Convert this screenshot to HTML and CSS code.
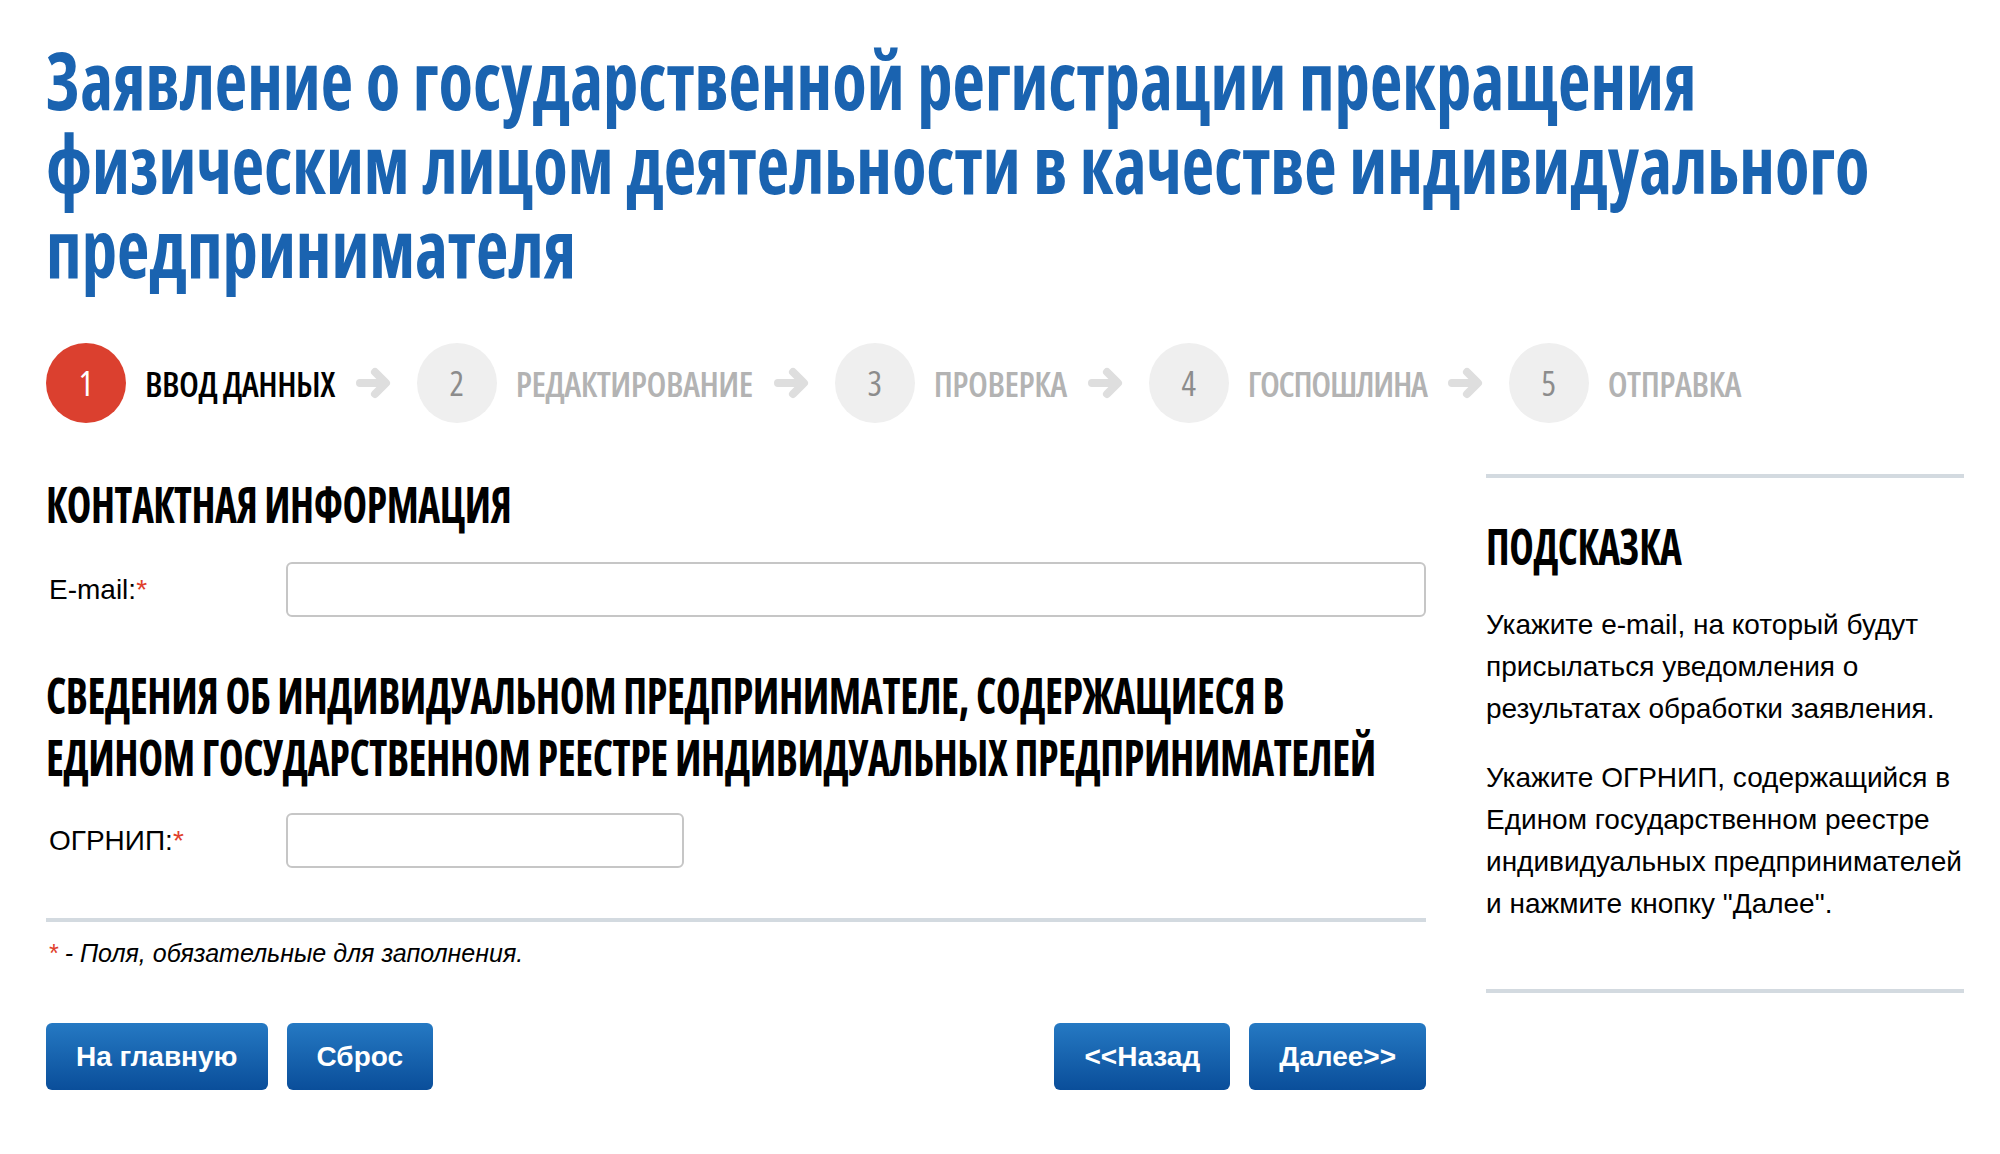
FILE: index.html
```html
<!DOCTYPE html>
<html lang="ru">
<head>
<meta charset="utf-8">
<title>Заявление о государственной регистрации прекращения</title>
<link rel="stylesheet" href="styles.css">
</head>
<body>
<div class="page">
  <h1 class="title">Заявление о государственной регистрации прекращения<br>физическим лицом деятельности в качестве индивидуального<br>предпринимателя</h1>

  <ol class="steps">
    <li class="step active"><span class="num">1</span><span class="label">Ввод данных</span></li>
    <li class="arrow"><svg viewBox="0 0 38 34" width="38" height="34"><path d="M5 17H28M20 6L31 17L20 28" fill="none" stroke="#dedede" stroke-width="8" stroke-linecap="round" stroke-linejoin="round"/></svg></li>
    <li class="step"><span class="num">2</span><span class="label">Редактирование</span></li>
    <li class="arrow"><svg viewBox="0 0 38 34" width="38" height="34"><path d="M5 17H28M20 6L31 17L20 28" fill="none" stroke="#dedede" stroke-width="8" stroke-linecap="round" stroke-linejoin="round"/></svg></li>
    <li class="step"><span class="num">3</span><span class="label">Проверка</span></li>
    <li class="arrow"><svg viewBox="0 0 38 34" width="38" height="34"><path d="M5 17H28M20 6L31 17L20 28" fill="none" stroke="#dedede" stroke-width="8" stroke-linecap="round" stroke-linejoin="round"/></svg></li>
    <li class="step"><span class="num">4</span><span class="label label-tight">Госпошлина</span></li>
    <li class="arrow"><svg viewBox="0 0 38 34" width="38" height="34"><path d="M5 17H28M20 6L31 17L20 28" fill="none" stroke="#dedede" stroke-width="8" stroke-linecap="round" stroke-linejoin="round"/></svg></li>
    <li class="step"><span class="num">5</span><span class="label">Отправка</span></li>
  </ol>

  <div class="main">
    <form class="form">
      <h2 class="sec">Контактная информация</h2>
      <div class="row">
        <label class="lbl">E-mail:<span class="req">*</span></label>
        <input class="inp inp-wide" type="text">
      </div>
      <h2 class="sec sec-2">Сведения об индивидуальном предпринимателе, содержащиеся в<br>Едином государственном реестре индивидуальных предпринимателей</h2>
      <div class="row row-2">
        <label class="lbl">ОГРНИП:<span class="req">*</span></label>
        <input class="inp inp-short" type="text">
      </div>
      <div class="divider"></div>
      <p class="note"><span class="req">*</span> - Поля, обязательные для заполнения.</p>
      <div class="buttons">
        <div class="btn-group">
          <button type="button" class="btn">На главную</button>
          <button type="button" class="btn">Сброс</button>
        </div>
        <div class="btn-group">
          <button type="button" class="btn">&lt;&lt;Назад</button>
          <button type="button" class="btn">Далее&gt;&gt;</button>
        </div>
      </div>
    </form>

    <aside class="hint">
      <h3 class="hint-title">Подсказка</h3>
      <p class="hint-text">Укажите e-mail, на который будут<br>присылаться уведомления о<br>результатах обработки заявления.</p>
      <p class="hint-text hint-text-2">Укажите ОГРНИП, содержащийся в<br>Едином государственном реестре<br>индивидуальных предпринимателей<br>и нажмите кнопку "Далее".</p>
    </aside>
  </div>
</div>
</body>
</html>
```

FILE: styles.css
```css
html, body {
  margin: 0;
  padding: 0;
  background: #fff;
}

body {
  font-family: "Liberation Sans", Arial, sans-serif;
  color: #000;
}

.page {
  padding: 37px 36px 0 46px;
}

.title {
  margin: 0;
  font-family: "Open Sans", "Roboto Condensed", sans-serif;
  font-stretch: 75%;
  font-weight: 700;
  font-size: 80px;
  line-height: 84px;
  color: #1a63b0;
  white-space: nowrap;
  transform: scaleX(0.884);
  transform-origin: 0 0;
}

.steps {
  list-style: none;
  margin: 54px 0 0;
  padding: 0;
  display: flex;
  align-items: center;
  height: 80px;
}

.step {
  display: flex;
  align-items: center;
}

.num {
  width: 80px;
  height: 80px;
  border-radius: 50%;
  background: #efefef;
  color: #8c8c8c;
  display: flex;
  align-items: center;
  justify-content: center;
  font-family: "Open Sans", "Roboto Condensed", sans-serif;
  font-stretch: 75%;
  font-weight: 400;
  font-size: 34px;
}

.label {
  margin-left: 19px;
  font-family: "Open Sans", "Roboto Condensed", sans-serif;
  font-stretch: 75%;
  font-weight: 600;
  font-size: 35px;
  letter-spacing: -0.5px;
  text-transform: uppercase;
  color: #b3b3b3;
  white-space: nowrap;
}

.label-tight {
  letter-spacing: -1.3px;
}

.step.active .num {
  background: #db402f;
  color: #fff;
}

.step.active .label {
  color: #000;
}

.arrow {
  display: flex;
  align-items: center;
  margin: 0 24px 0 20px;
}

.main {
  margin-top: 51px;
  display: grid;
  grid-template-columns: 1380px 478px;
  column-gap: 60px;
  align-items: start;
}

.sec {
  margin: 2px 0 0;
  font-family: "Open Sans", "Roboto Condensed", sans-serif;
  font-stretch: 75%;
  font-weight: 700;
  font-size: 50px;
  line-height: 56px;
  letter-spacing: -0.5px;
  text-transform: uppercase;
  color: #000;
  white-space: nowrap;
  transform: scaleX(0.83);
  transform-origin: 0 0;
}

.sec-2 {
  margin-top: 47px;
  line-height: 62px;
  transform: scaleX(0.84);
}

.row {
  margin-top: 30px;
  display: flex;
  align-items: center;
}

.row-2 {
  margin-top: 25px;
}

.lbl {
  width: 237px;
  padding-left: 3px;
  font-size: 28px;
  color: #000;
}

.req {
  color: #e0402c;
}

.inp {
  box-sizing: border-box;
  height: 55px;
  border: 2px solid #c6c6c6;
  border-radius: 6px;
  background: #fff;
  font-size: 24px;
  padding: 0 12px;
  outline: none;
}

.inp-wide {
  flex: 1;
}

.inp-short {
  width: 398px;
}

.divider {
  margin-top: 50px;
  height: 4px;
  background: #d3dae0;
}

.note {
  margin: 16px 0 0;
  font-size: 25px;
  line-height: 30px;
  font-style: italic;
  padding-left: 2px;
}

.buttons {
  margin-top: 55px;
  display: flex;
  justify-content: space-between;
}

.btn-group {
  display: flex;
  gap: 19px;
}

.btn {
  height: 67px;
  padding: 0 30px;
  border: none;
  border-radius: 6px;
  background: linear-gradient(#2579c3, #0a4e9a);
  color: #fff;
  font-family: "Liberation Sans", Arial, sans-serif;
  font-weight: 700;
  font-size: 28px;
  cursor: pointer;
}

.hint {
  border-top: 4px solid #d3dae0;
  border-bottom: 4px solid #d3dae0;
  padding-bottom: 64px;
}

.hint-title {
  margin: 40px 0 0;
  font-family: "Open Sans", "Roboto Condensed", sans-serif;
  font-stretch: 75%;
  font-weight: 700;
  font-size: 50px;
  line-height: 56px;
  letter-spacing: -0.5px;
  text-transform: uppercase;
  transform: scaleX(0.83);
  transform-origin: 0 0;
}

.hint-text {
  margin: 30px 0 0;
  font-size: 28px;
  line-height: 42px;
  white-space: nowrap;
}

.hint-text-2 {
  margin-top: 27px;
}
```
